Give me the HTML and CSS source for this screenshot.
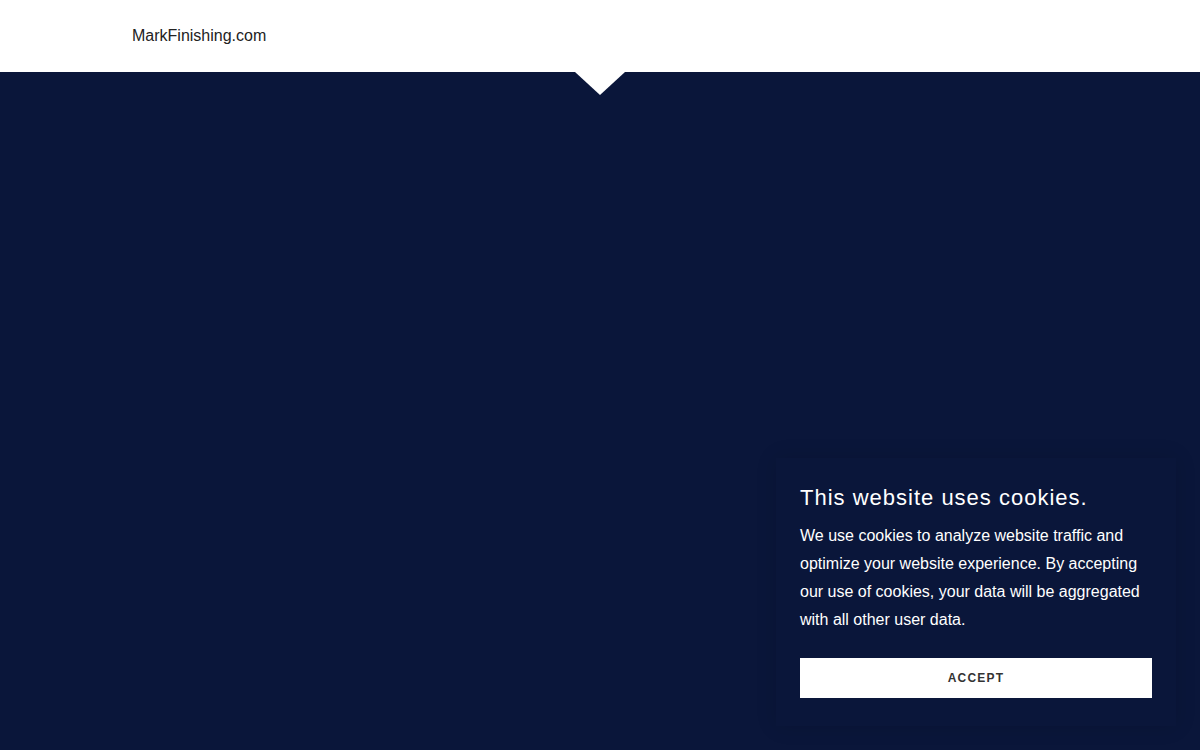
FILE: index.html
```html
<!DOCTYPE html>
<html lang="en">
<head>
<meta charset="utf-8">
<title>MarkFinishing.com</title>
<link rel="stylesheet" href="styles.css">
</head>
<body>
<header class="header">
  <div class="brand">MarkFinishing.com</div>
  <span class="notch"></span>
</header>
<main class="hero"></main>
<div class="cookie">
  <h2 class="cookie-title">This website uses cookies.</h2>
  <p class="cookie-text">We use cookies to analyze website traffic and optimize your website experience. By accepting our use of cookies, your data will be aggregated with all other user data.</p>
  <button class="cookie-btn">ACCEPT</button>
</div>
</body>
</html>
```
FILE: styles.css
```css
html, body {
  margin: 0;
  padding: 0;
  height: 100%;
}
body {
  font-family: "Liberation Sans", Arial, sans-serif;
  background: #0a163a;
  overflow: hidden;
}
.header {
  position: relative;
  height: 72px;
  background: #fff;
  display: flex;
  align-items: center;
  padding-left: 132px;
}
.brand {
  font-size: 16px;
  color: #222;
}
.notch {
  position: absolute;
  left: 575px;
  top: 72px;
  width: 0;
  height: 0;
  border-left: 25.5px solid transparent;
  border-right: 25.5px solid transparent;
  border-top: 23px solid #fff;
}
.hero {
  height: calc(100% - 72px);
  background: #0a163a;
}
.cookie {
  position: absolute;
  left: 776px;
  width: 352px;
  bottom: 24px;
  padding: 26px 24px 28px;
  background: #0a163a;
  box-shadow: 0 0 20px rgba(0, 0, 0, 0.12);
}
.cookie-title {
  margin: 0 0 10px;
  font-size: 22px;
  font-weight: 400;
  letter-spacing: 1px;
  color: #fff;
  line-height: 28px;
}
.cookie-text {
  margin: 0 0 24px;
  font-size: 16px;
  line-height: 28px;
  color: #fff;
}
.cookie-btn {
  display: block;
  width: 100%;
  height: 40px;
  border: 0;
  background: #fff;
  color: #333;
  font-family: "Liberation Sans", Arial, sans-serif;
  font-size: 12px;
  font-weight: 700;
  letter-spacing: 1.2px;
  cursor: pointer;
}
```
